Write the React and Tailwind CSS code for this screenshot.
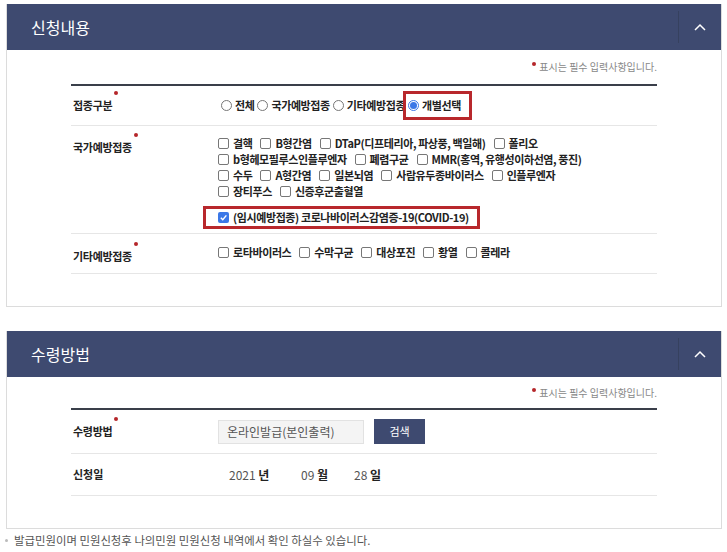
import { useState } from 'react'

const FONT = { fontFamily: '"Noto Sans CJK KR", "Noto Sans", sans-serif' }

const Radio = ({ checked }) => (
  <span className={`inline-flex items-center justify-center w-[11px] h-[11px] rounded-full border shrink-0 ${checked ? 'border-[#3b78e7] bg-white' : 'border-[#777] bg-white'}`}>
    {checked && <span className="w-[7px] h-[7px] rounded-full bg-[#3b78e7]" />}
  </span>
)

const Check = ({ checked }) => (
  checked ? (
    <span className="inline-flex items-center justify-center w-[11px] h-[11px] rounded-[2px] bg-[#3b78e7] shrink-0">
      <svg width="9" height="9" viewBox="0 0 10 10">
        <path d="M2 5.2 L4.2 7.4 L8.2 2.6" fill="none" stroke="white" strokeWidth="1.6" />
      </svg>
    </span>
  ) : (
    <span className="inline-block w-[11px] h-[11px] rounded-[2px] border border-[#777] bg-white shrink-0" />
  )
)

const CheckItem = ({ label, checked, last }) => (
  <span className={`inline-flex items-center gap-[4px] whitespace-nowrap ${last ? '' : 'mr-[8px]'}`}>
    <Check checked={checked} />
    <span>{label}</span>
  </span>
)

const Label = ({ children }) => (
  <div className="w-[147px] shrink-0 pl-[2px] text-[11px] font-bold text-[#222] tracking-[-0.3px]">
    <span className="relative">
      {children}
      <span className="absolute -right-[6px] -top-[6px] w-[4px] h-[4px] rounded-full bg-[#b5262a]" />
    </span>
  </div>
)

const Required = () => (
  <div className="flex justify-end items-center text-[10px] leading-[14px] text-[#888]">
    <span className="w-[4px] h-[4px] rounded-full bg-[#b5262a] mr-[3px] -mt-[6px]" />
    표시는 필수 입력사항입니다.
  </div>
)

const Panel = ({ title, children }) => (
  <div className="border border-[#dcdcdc] border-t-0">
    <div className="h-[46px] bg-[#3e4a70] flex items-center">
      <h2 className="pl-[24px] text-[16px] text-white">{title}</h2>
      <div className="ml-auto h-[32px] w-[43px] border-l border-[#36415f] flex items-center justify-center">
        <svg width="12" height="8" viewBox="0 0 12 8">
          <path d="M1 7 L6 2 L11 7" fill="none" stroke="white" strokeWidth="1.5" />
        </svg>
      </div>
    </div>
    <div className="px-[64px]">{children}</div>
  </div>
)

const nationalRows = [
  ['결핵', 'B형간염', 'DTaP(디프테리아, 파상풍, 백일해)', '폴리오'],
  ['b형헤모필루스인플루엔자', '폐렴구균', 'MMR(홍역, 유행성이하선염, 풍진)'],
  ['수두', 'A형간염', '일본뇌염', '사람유두종바이러스', '인플루엔자'],
  ['장티푸스', '신증후군출혈열'],
]

const otherItems = ['로타바이러스', '수막구균', '대상포진', '황열', '콜레라']

export default function App() {
  const [open] = useState(true)

  return (
    <div className="w-[727px] h-[552px] bg-white pl-[6px] pr-[5px] pt-[4px] text-[#333]" style={FONT}>
      <Panel title="신청내용">
        {open && (
          <div className="pt-[10px] pb-[32px]">
            <Required />
            <div className="mt-[10px] border-t-2 border-[#3a3f4a]">
              {/* 접종구분 */}
              <div className="h-[40px] flex items-center border-b border-[#e6e6e6]">
                <Label>접종구분</Label>
                <div className="flex items-center text-[11px] font-bold text-[#222] tracking-[-0.4px] pl-[3px]">
                  <span className="inline-flex items-center gap-[3px] mr-[3px]"><Radio />전체</span>
                  <span className="inline-flex items-center gap-[3px] mr-[3px]"><Radio />국가예방접종</span>
                  <span className="inline-flex items-center gap-[3px]"><Radio />기타예방접종</span>
                  <span className="inline-flex items-center gap-[3px] border-[3px] border-[#b8282c] h-[29px] pl-[2px] pr-[8px] -ml-[2px]"><Radio checked />개별선택</span>
                </div>
              </div>
              {/* 국가예방접종 */}
              <div className="flex border-b border-[#e6e6e6] pt-[9px] pb-[4px]">
                <div className="pt-[4px]"><Label>국가예방접종</Label></div>
                <div className="text-[11px] font-bold text-[#222] tracking-[-0.4px]">
                  {nationalRows.map((row, i) => (
                    <div key={i} className="h-[16px] flex items-center">
                      {row.map((item, j) => <CheckItem key={item} label={item} last={j === row.length - 1} />)}
                    </div>
                  ))}
                  <div className="mt-[7px] -ml-[15px] h-[23px] w-fit border-[3px] border-[#b8282c] flex items-center pl-[12px] pr-[8px]">
                    <CheckItem checked last label="(임시예방접종) 코로나바이러스감염증-19(COVID-19)" />
                  </div>
                </div>
              </div>
              {/* 기타예방접종 */}
              <div className="h-[40px] flex items-center border-b border-[#e6e6e6]">
                <div className="pt-[6px]"><Label>기타예방접종</Label></div>
                <div className="flex items-center text-[11px] font-bold text-[#222] tracking-[-0.4px] -mt-[2px]">
                  {otherItems.map((item, j) => <CheckItem key={item} label={item} last={j === otherItems.length - 1} />)}
                </div>
              </div>
            </div>
          </div>
        )}
      </Panel>

      <div className="h-[24px]" />

      <Panel title="수령방법">
        <div className="pt-[9px] pb-[32px]">
          <Required />
          <div className="mt-[8px] border-t-2 border-[#3a3f4a]">
            <div className="h-[44px] flex items-center border-b border-[#e6e6e6]">
              <Label>수령방법</Label>
              <div className="flex items-center gap-[10px]">
                <div className="w-[146px] h-[24px] bg-[#f4f4f4] border border-[#e2e2e2] flex items-center pl-[8px] text-[12px] text-[#555]">
                  온라인발급(본인출력)
                </div>
                <button className="w-[51px] h-[25px] bg-[#3e4a70] text-white text-[11px]">검색</button>
              </div>
            </div>
            <div className="h-[42px] flex items-center border-b border-[#e6e6e6]">
              <div className="w-[147px] shrink-0 pl-[2px] text-[11px] font-bold text-[#222]">신청일</div>
              <div className="flex items-center text-[12px] text-[#555] pl-[11px]">
                <span className="w-[72px]">2021 <b className="text-[#222]">년</b></span>
                <span className="w-[53px]">09 <b className="text-[#222]">월</b></span>
                <span>28 <b className="text-[#222]">일</b></span>
              </div>
            </div>
          </div>
        </div>
      </Panel>

      <p className="mt-[4px] -ml-[1px] flex items-center text-[11.4px] leading-[14px] text-[#555]">
        <span className="w-[3px] h-[3px] rounded-full bg-[#bbb] mr-[6px]" />
        발급민원이며 민원신청후 나의민원 민원신청 내역에서 확인 하실수 있습니다.
      </p>
    </div>
  )
}
